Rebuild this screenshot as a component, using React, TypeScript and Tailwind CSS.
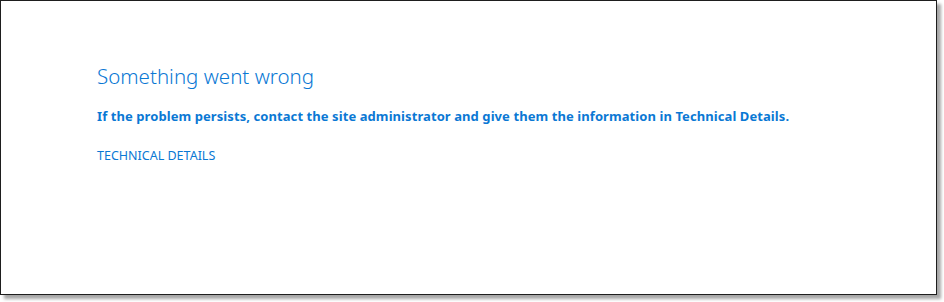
import React from 'react';

export default function App() {
    return (
        <div className="w-[944px] h-[302px] bg-white relative">
            {/* Framed page with drop shadow */}
            <div className="w-[937px] h-[295px] border border-[#1e1e1e] bg-white shadow-[4px_4px_3px_rgba(0,0,0,0.35)]">
                <div className="pl-[96px] pt-[61px] text-[#0a78d4] font-['Noto_Sans',sans-serif]">
                    <h1 className="text-[20.5px] font-light leading-[28px]">Something went wrong</h1>
                    <p className="mt-[17px] text-[13px] font-bold leading-[18px] tracking-[0.08px]">
                        If the problem persists, contact the site administrator and give them the information in Technical Details.
                    </p>
                    <button className="mt-[23px] text-[12.5px] leading-[16px] uppercase block">
                        Technical Details
                    </button>
                </div>
            </div>
        </div>
    );
}
